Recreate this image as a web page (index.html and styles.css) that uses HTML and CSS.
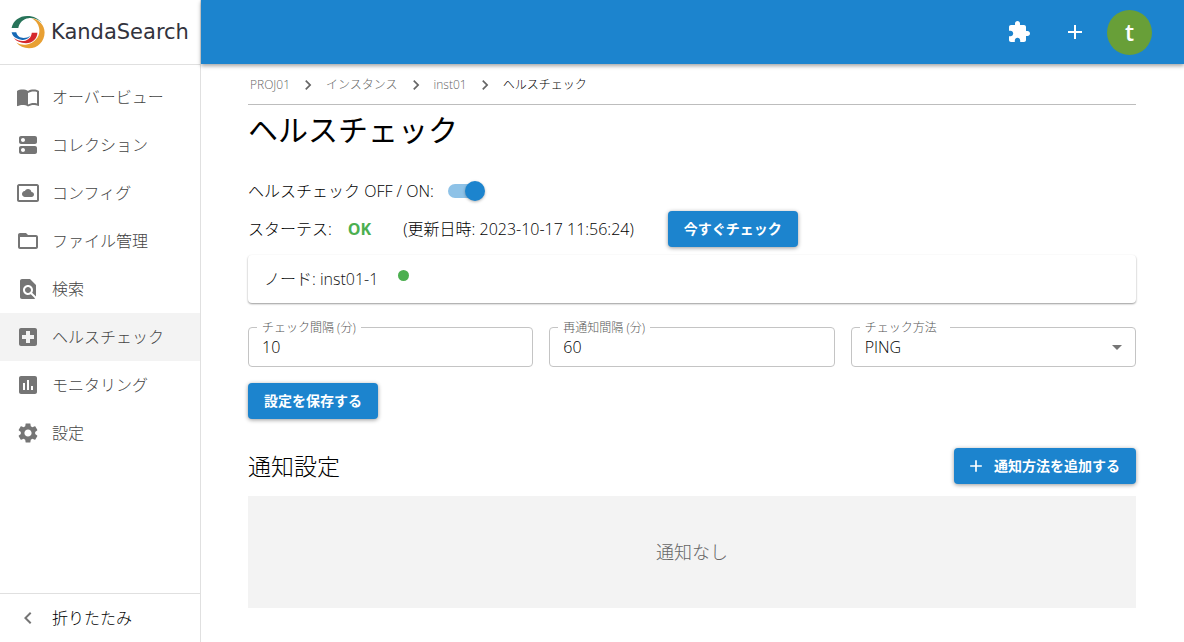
FILE: index.html
```html
<!DOCTYPE html>
<html lang="ja">
<head>
<meta charset="utf-8">
<meta name="viewport" content="width=device-width, initial-scale=1">
<title>ヘルスチェック - KandaSearch</title>
<link rel="stylesheet" href="styles.css">
</head>
<body>
<div class="app">
  <aside class="sidebar">
    <a class="brand" href="#">
      <svg class="brand-mark" viewBox="0 0 34 34" aria-hidden="true">
        <path fill="#e8a033" d="M20.5 3.2C28 4.2 33.6 10 33.6 17.4C33.6 26.400 26.600 33.300 18 33.300C12.800 33.300 8.500 31.200 5.300 27.600C9 29.600 12.500 30.200 16 29.500C23 28 28.400 22.600 28.400 15.800C28.400 10.400 25.400 5.600 20.500 3.200Z"/>
        <path fill="#28745a" d="M.6 13C2 5.600 8.400.9 16.200.9C22.600.9 28 3.600 31 8C27.400 4.600 22.600 2.700 17.600 3.200C12.200 3.800 8.400 7.600 7.300 13Z"/>
        <path fill="#1769b5" d="M.6 17.300H5.200C6.200 21 9 23 12.600 23C15.200 23 17.400 22.200 19.200 20.800C17.600 23.600 14.600 25.200 11.200 24.900C5.600 24.400 1.600 21.600.6 17.300Z"/>
        <path fill="#d5292d" d="M20.800 17.700H26.400C26.200 24 21.400 28.200 15 28.200C9.600 28.200 5.300 26.300 2.800 23C6 25.200 9.400 26.200 12.800 25.900C17.400 25.500 20.400 22 20.800 17.700Z"/>
      </svg>
      <span class="brand-name">KandaSearch</span>
    </a>
    <nav class="nav">
      <a class="nav-item" href="#"><svg class="icon" viewBox="0 0 24 24" aria-hidden="true"><path d="M21 5c-1.110-.35-2.330-.5-3.500-.5-1.950 0-4.050.4-5.500 1.500-1.450-1.100-3.550-1.500-5.500-1.500S2.450 4.900 1 6v14.650c0 .25.25.5.5.5.1 0 .15-.05.25-.05C3.100 20.450 5.050 20 6.500 20c1.950 0 4.050.4 5.500 1.500 1.350-.85 3.800-1.500 5.500-1.500 1.650 0 3.350.3 4.750 1.050.1.050.15.050.25.050.25 0 .5-.25.5-.5V6c-.6-.45-1.250-.75-2-1zm0 13.500c-1.100-.35-2.300-.5-3.500-.5-1.700 0-4.150.65-5.500 1.500V8c1.350-.85 3.800-1.500 5.500-1.500 1.200 0 2.400.15 3.500.5v11.500z"/></svg>オーバービュー</a>
      <a class="nav-item" href="#"><svg class="icon" viewBox="0 0 24 24" aria-hidden="true"><path d="M19 13H5c-1.100 0-2 .9-2 2v4c0 1.100.9 2 2 2h14c1.100 0 2-.9 2-2v-4c0-1.100-.9-2-2-2zM7 19c-1.100 0-2-.9-2-2s.9-2 2-2 2 .9 2 2-.9 2-2 2zM19 3H5c-1.100 0-2 .9-2 2v4c0 1.100.9 2 2 2h14c1.100 0 2-.9 2-2V5c0-1.100-.9-2-2-2zM7 9c-1.100 0-2-.9-2-2s.9-2 2-2 2 .9 2 2-.9 2-2 2z"/></svg>コレクション</a>
      <a class="nav-item" href="#"><svg class="icon" viewBox="0 0 24 24" aria-hidden="true"><path d="M21 3H3c-1 0-2 1-2 2v14c0 1.100.9 2 2 2h18c1 0 2-1 2-2V5c0-1-1-2-2-2zm0 16H3V5h18v14zM9 16h6.500c1.380 0 2.500-1.120 2.500-2.500S16.880 11 15.500 11h-.05c-.24-1.690-1.690-3-3.450-3-1.400 0-2.600.83-3.160 2.020h-.16C7.170 10.180 6 11.450 6 13c0 1.660 1.340 3 3 3z"/></svg>コンフィグ</a>
      <a class="nav-item" href="#"><svg class="icon" viewBox="0 0 24 24" aria-hidden="true"><path d="M20 6h-8l-2-2H4c-1.100 0-1.990.9-1.990 2L2 18c0 1.100.9 2 2 2h16c1.100 0 2-.9 2-2V8c0-1.100-.9-2-2-2zm0 12H4V8h16v10z"/></svg>ファイル管理</a>
      <a class="nav-item" href="#"><svg class="icon" viewBox="0 0 24 24" aria-hidden="true"><path d="M20 19.590V8l-6-6H6c-1.100 0-1.990.9-1.990 2L4 20c0 1.100.89 2 1.990 2H18c.45 0 .85-.15 1.190-.4l-4.430-4.430c-.8.52-1.740.83-2.760.83-2.760 0-5-2.240-5-5s2.240-5 5-5 5 2.240 5 5c0 1.020-.31 1.960-.83 2.750L20 19.590zM9 13c0 1.660 1.340 3 3 3s3-1.340 3-3-1.340-3-3-3-3 1.340-3 3z"/></svg>検索</a>
      <a class="nav-item nav-item-active" href="#" aria-current="page"><svg class="icon" viewBox="0 0 24 24" aria-hidden="true"><path d="M19 3H5c-1.100 0-1.990.9-1.990 2L3 19c0 1.100.9 2 2 2h14c1.100 0 2-.9 2-2V5c0-1.100-.9-2-2-2zm-1 11h-4v4h-4v-4H6v-4h4V6h4v4h4v4z"/></svg>ヘルスチェック</a>
      <a class="nav-item" href="#"><svg class="icon" viewBox="0 0 24 24" aria-hidden="true"><path d="M19 3H5c-1.100 0-2 .9-2 2v14c0 1.100.9 2 2 2h14c1.100 0 2-.9 2-2V5c0-1.100-.9-2-2-2zM9 17H7v-7h2v7zm4 0h-2V7h2v10zm4 0h-2v-4h2v4z"/></svg>モニタリング</a>
      <a class="nav-item" href="#"><svg class="icon" viewBox="0 0 24 24" aria-hidden="true"><path d="M19.140 12.940c.04-.3.060-.61.060-.94 0-.32-.02-.64-.07-.94l2.030-1.580c.18-.14.23-.41.12-.61l-1.920-3.320c-.12-.22-.37-.29-.59-.22l-2.390.96c-.5-.38-1.030-.7-1.620-.94l-.36-2.540c-.04-.24-.24-.41-.48-.41h-3.840c-.24 0-.43.17-.47.41l-.36 2.540c-.59.24-1.130.57-1.620.94l-2.390-.96c-.22-.08-.47 0-.59.22L2.740 8.870c-.12.21-.08.47.12.61l2.030 1.580c-.05.3-.09.63-.09.94s.02.64.07.94l-2.030 1.580c-.18.14-.23.41-.12.61l1.920 3.320c.12.22.37.29.59.22l2.390-.96c.5.38 1.030.7 1.620.94l.36 2.540c.05.24.24.41.48.41h3.840c.24 0 .44-.17.47-.41l.36-2.540c.59-.24 1.130-.56 1.620-.94l2.390.96c.22.080.47 0 .59-.22l1.920-3.320c.12-.22.070-.47-.12-.61l-2.010-1.580zM12 15.600c-1.980 0-3.600-1.620-3.600-3.600s1.620-3.600 3.600-3.600 3.600 1.620 3.600 3.600-1.620 3.600-3.600 3.600z"/></svg>設定</a>
    </nav>
    <button class="collapse" type="button"><svg class="icon" viewBox="0 0 24 24" aria-hidden="true"><path d="M15.410 7.410 14 6l-6 6 6 6 1.410-1.410L10.830 12z"/></svg>折りたたみ</button>
  </aside>

  <div class="page">
    <header class="topbar">
      <button class="icon-button" type="button" aria-label="拡張機能"><svg class="icon" viewBox="0 0 24 24" aria-hidden="true"><path d="M20.500 11H19V7c0-1.100-.9-2-2-2h-4V3.500C13 2.120 11.880 1 10.500 1S8 2.120 8 3.500V5H4c-1.100 0-1.990.9-1.990 2v3.800H3.500c1.490 0 2.700 1.210 2.700 2.700s-1.210 2.700-2.700 2.700H2V20c0 1.100.9 2 2 2h3.800v-1.500c0-1.490 1.210-2.700 2.700-2.700 1.490 0 2.700 1.210 2.700 2.700V22H17c1.100 0 2-.9 2-2v-4h1.500c1.380 0 2.500-1.120 2.500-2.500S21.880 11 20.500 11z"/></svg></button>
      <button class="icon-button" type="button" aria-label="追加"><svg class="icon" viewBox="0 0 24 24" aria-hidden="true"><path d="M19 13h-6v6h-2v-6H5v-2h6V5h2v6h6v2z"/></svg></button>
      <button class="avatar" type="button">t</button>
    </header>

    <main class="content">
      <nav class="breadcrumb" aria-label="パンくず">
        <a href="#">PROJ01</a>
        <svg class="crumb-sep" viewBox="0 0 24 24" aria-hidden="true"><path d="M10 6 8.590 7.410 13.170 12l-4.580 4.590L10 18l6-6z"/></svg>
        <a href="#">インスタンス</a>
        <svg class="crumb-sep" viewBox="0 0 24 24" aria-hidden="true"><path d="M10 6 8.590 7.410 13.170 12l-4.580 4.590L10 18l6-6z"/></svg>
        <a href="#">inst01</a>
        <svg class="crumb-sep" viewBox="0 0 24 24" aria-hidden="true"><path d="M10 6 8.590 7.410 13.170 12l-4.580 4.590L10 18l6-6z"/></svg>
        <span class="crumb-current" aria-current="page">ヘルスチェック</span>
      </nav>
      <h1 class="title">ヘルスチェック</h1>

      <div class="toggle-row">
        <label for="health-toggle">ヘルスチェック OFF / ON:</label>
        <input class="switch" id="health-toggle" type="checkbox" role="switch" checked>
      </div>

      <div class="status-row">
        <span>スターテス:</span>
        <strong class="status-ok">OK</strong>
        <span class="status-time">(更新日時: 2023-10-17 11:56:24)</span>
        <button class="button" type="button">今すぐチェック</button>
      </div>

      <div class="node-card">
        <span>ノード: inst01-1</span>
        <span class="node-dot"></span>
      </div>

      <form class="settings">
        <div class="fields">
          <div class="field">
            <label class="field-label" for="interval">チェック間隔 (分)</label>
            <input class="field-control" id="interval" type="text" inputmode="numeric" value="10">
          </div>
          <div class="field">
            <label class="field-label" for="renotify">再通知間隔 (分)</label>
            <input class="field-control" id="renotify" type="text" inputmode="numeric" value="60">
          </div>
          <div class="field">
            <label class="field-label field-label-select" for="method">チェック方法</label>
            <select class="field-control" id="method"><option>PING</option></select>
            <svg class="field-arrow" viewBox="0 0 24 24" aria-hidden="true"><path d="m7 10 5 5 5-5z"/></svg>
          </div>
        </div>
        <button class="button" type="button">設定を保存する</button>
      </form>

      <section>
        <div class="section-head">
          <h2 class="section-title">通知設定</h2>
          <button class="button button-add" type="button"><svg class="button-icon" viewBox="0 0 24 24" aria-hidden="true"><path d="M19 13h-6v6h-2v-6H5v-2h6V5h2v6h6v2z"/></svg>通知方法を追加する</button>
        </div>
        <p class="empty">通知なし</p>
      </section>
    </main>
  </div>
</div>
</body>
</html>
```
FILE: styles.css
```css
* {
  box-sizing: border-box;
}

body {
  margin: 0;
  background: #fff;
  color: #000;
  font-family: "Open Sans", "Noto Sans CJK JP", sans-serif;
  font-size: 16px;
  font-weight: 300;
  line-height: 24px;
}

button,
input,
select {
  font: inherit;
}

a {
  color: inherit;
  text-decoration: none;
}

svg {
  fill: currentColor;
  flex: none;
}

.app {
  display: flex;
  min-height: 100vh;
}

.sidebar {
  display: flex;
  flex: none;
  flex-direction: column;
  width: 201px;
  border-right: 1px solid #e0e0e0;
}

.brand {
  display: flex;
  align-items: center;
  gap: 6px;
  height: 65px;
  padding-left: 11px;
  border-bottom: 1px solid #e0e0e0;
}

.brand-mark {
  width: 34px;
  height: 34px;
}

.brand-name {
  color: #32333d;
  font-family: "DejaVu Sans", sans-serif;
  font-size: 21px;
  font-weight: 400;
}

.nav {
  flex: 1;
  padding-top: 8px;
}

.nav-item,
.collapse {
  display: flex;
  align-items: center;
  gap: 12px;
  height: 48px;
  padding: 0 16px;
}

.nav-item {
  color: #444;
}

.nav-item-active {
  background: #f3f3f3;
}

.icon {
  width: 24px;
  height: 24px;
}

.sidebar .icon {
  color: #757575;
}

.collapse {
  height: 49px;
  border: 0;
  border-top: 1px solid #e0e0e0;
  background: none;
  color: #000;
}

.page {
  flex: 1;
  min-width: 0;
}

.topbar {
  display: flex;
  align-items: center;
  justify-content: flex-end;
  gap: 8px;
  height: 64px;
  padding-right: 32px;
  background: #1c84ce;
  box-shadow: 0 2px 4px rgba(0, 0, 0, 0.36);
  color: #fff;
}

.icon-button {
  display: flex;
  padding: 12px;
  border: 0;
  background: none;
  color: inherit;
}

.avatar {
  width: 45px;
  height: 45px;
  padding: 0;
  border: 0;
  border-radius: 50%;
  background: #689f38;
  color: #fff;
  font-size: 23px;
  font-weight: 600;
}

.content {
  padding: 8px 48px 32px 47px;
}

.breadcrumb {
  display: flex;
  align-items: center;
  height: 33px;
  padding: 0 2px 6px;
  border-bottom: 1px solid #bdbdbd;
  color: #666;
  font-size: 12px;
}

.crumb-sep {
  width: 20px;
  height: 20px;
  margin: 0 8px;
}

.crumb-current {
  color: #000;
}

.title {
  margin: 4px 0 0;
  font-size: 30px;
  font-weight: 400;
  line-height: 42px;
}

.toggle-row {
  display: flex;
  align-items: center;
  gap: 14px;
  margin-top: 28px;
}

.switch {
  position: relative;
  width: 34px;
  height: 14px;
  margin: 0;
  border-radius: 7px;
  appearance: none;
  background: #8ec2e7;
}

.switch::before {
  position: absolute;
  top: -3px;
  left: -3px;
  width: 20px;
  height: 20px;
  border-radius: 50%;
  background: #fff;
  box-shadow: 0 1px 3px rgba(0, 0, 0, 0.3);
  content: "";
}

.switch:checked::before {
  left: 17px;
  background: #1c84ce;
}

.status-row {
  display: flex;
  align-items: center;
  margin-top: 8px;
}

.status-ok {
  margin: 0 32px 0 16px;
  color: #4caf50;
  font-weight: 700;
}

.status-time {
  margin-right: 34px;
}

.button {
  display: inline-flex;
  align-items: center;
  height: 36px;
  padding: 0 16px;
  border: 0;
  border-radius: 4px;
  background: #1c84ce;
  box-shadow: 0 1px 4px rgba(0, 0, 0, 0.4);
  color: #fff;
  font-size: 14px;
  font-weight: 700;
}

.button-add {
  gap: 8px;
  padding-left: 12px;
}

.button-icon {
  width: 20px;
  height: 20px;
}

.node-card {
  display: flex;
  align-items: center;
  gap: 20px;
  height: 48px;
  margin-top: 8px;
  padding: 0 16px;
  border-radius: 4px;
  box-shadow: 0 1px 2px rgba(0, 0, 0, 0.4);
  color: #111;
}

.node-dot {
  width: 11px;
  height: 11px;
  margin-bottom: 8px;
  border-radius: 50%;
  background: #4caf50;
}

.fields {
  display: grid;
  grid-template-columns: repeat(3, 1fr);
  gap: 16px;
  margin: 24px 0 16px;
}

.field {
  position: relative;
}

.field-label {
  position: absolute;
  top: -7px;
  left: 9px;
  padding: 0 5px;
  background: #fff;
  color: #555;
  font-size: 12px;
  line-height: 16px;
}

.field-label-select {
  padding-right: 13px;
}

.field-control {
  display: block;
  width: 100%;
  height: 40px;
  padding: 0 13px;
  border: 1px solid #c4c4c4;
  border-radius: 4px;
  appearance: none;
  background: none;
  color: #000;
}

.field-arrow {
  position: absolute;
  top: 8px;
  right: 7px;
  width: 24px;
  height: 24px;
  color: #757575;
  pointer-events: none;
}

.section-head {
  display: flex;
  align-items: center;
  justify-content: space-between;
  margin-top: 29px;
}

.section-title {
  margin: 0;
  font-size: 23px;
  font-weight: 300;
  line-height: 36px;
}

.empty {
  margin: 12px 0 0;
  padding: 44px 16px;
  background: #f3f3f3;
  color: #666;
  font-size: 18px;
  text-align: center;
}
```
